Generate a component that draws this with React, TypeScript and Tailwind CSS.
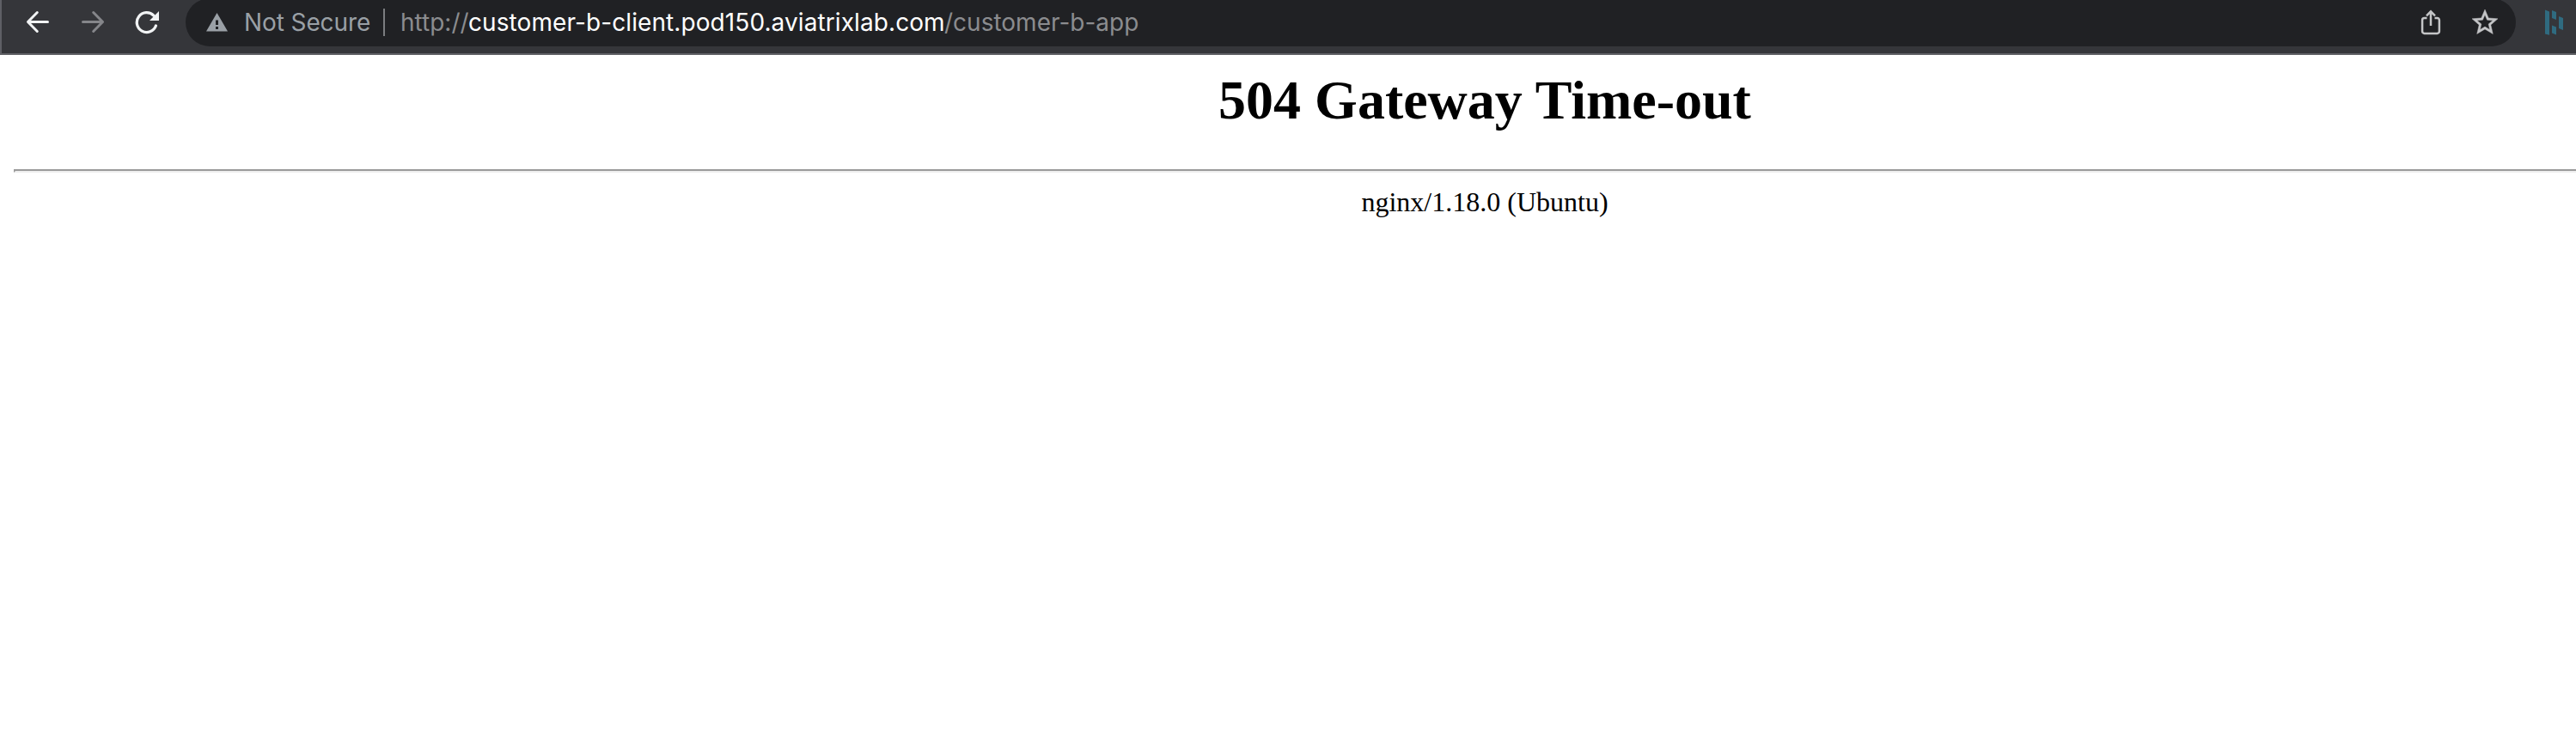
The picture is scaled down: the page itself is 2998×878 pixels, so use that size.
function Toolbar() {
  return (
    <header className="flex h-16 w-full items-start overflow-hidden border-b-2 border-l-2 border-b-[#5f6065] border-l-[#5f6065] bg-[#35363a]">
      <nav className="flex h-[52px] w-[214px] shrink-0 items-center">
        <svg className="ml-[28px] size-[28px]" viewBox="0 0 28 28" fill="none" stroke="#f1f3f4" strokeWidth="3" strokeLinecap="round" strokeLinejoin="round">
          <path d="M25.5 13.5H3M13.3 2.5L2.5 13.5l10.8 11" />
        </svg>
        <svg className="ml-[36px] size-[28px]" viewBox="0 0 28 28" fill="none" stroke="#85868a" strokeWidth="3" strokeLinecap="round" strokeLinejoin="round">
          <path d="M2.5 13.5h23M14.7 2.5l10.8 11-10.8 11" />
        </svg>
        <svg className="ml-[35px] size-[28px]" viewBox="0 0 28 28">
          <path d="M24.4 18A11.4 11.4 0 1 1 21.9 6.2" fill="none" stroke="#f1f3f4" strokeWidth="3.3" strokeLinecap="round" />
          <path d="M28 1v11H17z" fill="#f1f3f4" />
        </svg>
      </nav>
      <div className="-mt-[2px] flex h-[56px] w-[2712px] shrink-0 items-center rounded-full bg-[#202124] pl-[24px] pr-[21px] font-['Inter',sans-serif] text-[28px] leading-[56px]">
        <svg className="h-[22px] w-[25px]" viewBox="0 0 25 22">
          <path fillRule="evenodd" fill="#9aa0a6" d="M12.5 0L25 21.5H0zM11 8.5v5.5h3V8.5zM11 16v3h3v-3z" />
        </svg>
        <span className="ml-[19px] w-[162px] whitespace-nowrap tracking-[-0.1px] text-[#9aa0a6]">Not Secure</span>
        <span className="h-8 w-[2px] bg-[#7b7d80]" />
        <div className="ml-[18px] flex flex-1 whitespace-nowrap text-[#8b8c8f]">
          <span className="w-[79px]">http://</span>
          <span className="w-[554px] tracking-[0.09px] text-white">customer-b-client.pod150.aviatrixlab.com</span>
          <span>/customer-b-app</span>
        </div>
        <svg className="h-[30px] w-[24px]" viewBox="0 0 24 30" fill="none" stroke="#c4c5c7" strokeWidth="2.5">
          <path d="M7.5 10H4.5A2.4 2.4 0 0 0 2.1 12.4V25.5A2.4 2.4 0 0 0 4.5 27.9H19.5A2.4 2.4 0 0 0 21.9 25.5V12.4A2.4 2.4 0 0 0 19.5 10H16.5M12 19V2.5M7 7.3L12 2.3L17 7.3" />
        </svg>
        <svg className="ml-[36px] size-[30px]" viewBox="2 2 20 20" fill="#c4c5c7" stroke="#c4c5c7" strokeWidth="0.3">
          <path d="M22 9.24l-7.19-.62L12 2 9.19 8.63 2 9.24l5.46 4.73L5.82 21 12 17.27 18.18 21l-1.63-7.03L22 9.24zM12 15.4l-3.76 2.27 1-4.28-3.32-2.88 4.38-.38L12 6.1l1.71 4.04 4.38.38-3.32 2.88 1 4.28L12 15.4z" />
        </svg>
      </div>
      <svg className="ml-[33px] mt-[11px] h-[30px] w-[22px] shrink-0" viewBox="0 0 22 30" fill="#2f6b80">
        <path d="M1 .5l5 2v27.3l-5-1.4zM9 1l5 2v9l-5-2zM9 18.5l5 2v9l-5-2zM17 8l5 2v14l-5-2z" />
      </svg>
    </header>
  );
}

export default function App() {
  return (
    <div className="flex h-[878px] w-full flex-col overflow-hidden bg-white">
      <Toolbar />
      <main className="ml-4 w-[3424px] shrink-0 pt-[16px] text-center font-['Liberation_Serif',serif] text-black">
        <h1 className="text-[64px] leading-[74px] font-bold">504 Gateway Time-out</h1>
        <hr className="mt-[43px] h-[4px] border-2 border-[#9a9a9a] border-b-[#eeeeee]" />
        <p className="mt-[16px] text-[32px] leading-[37px]">nginx/1.18.0 (Ubuntu)</p>
      </main>
    </div>
  );
}
